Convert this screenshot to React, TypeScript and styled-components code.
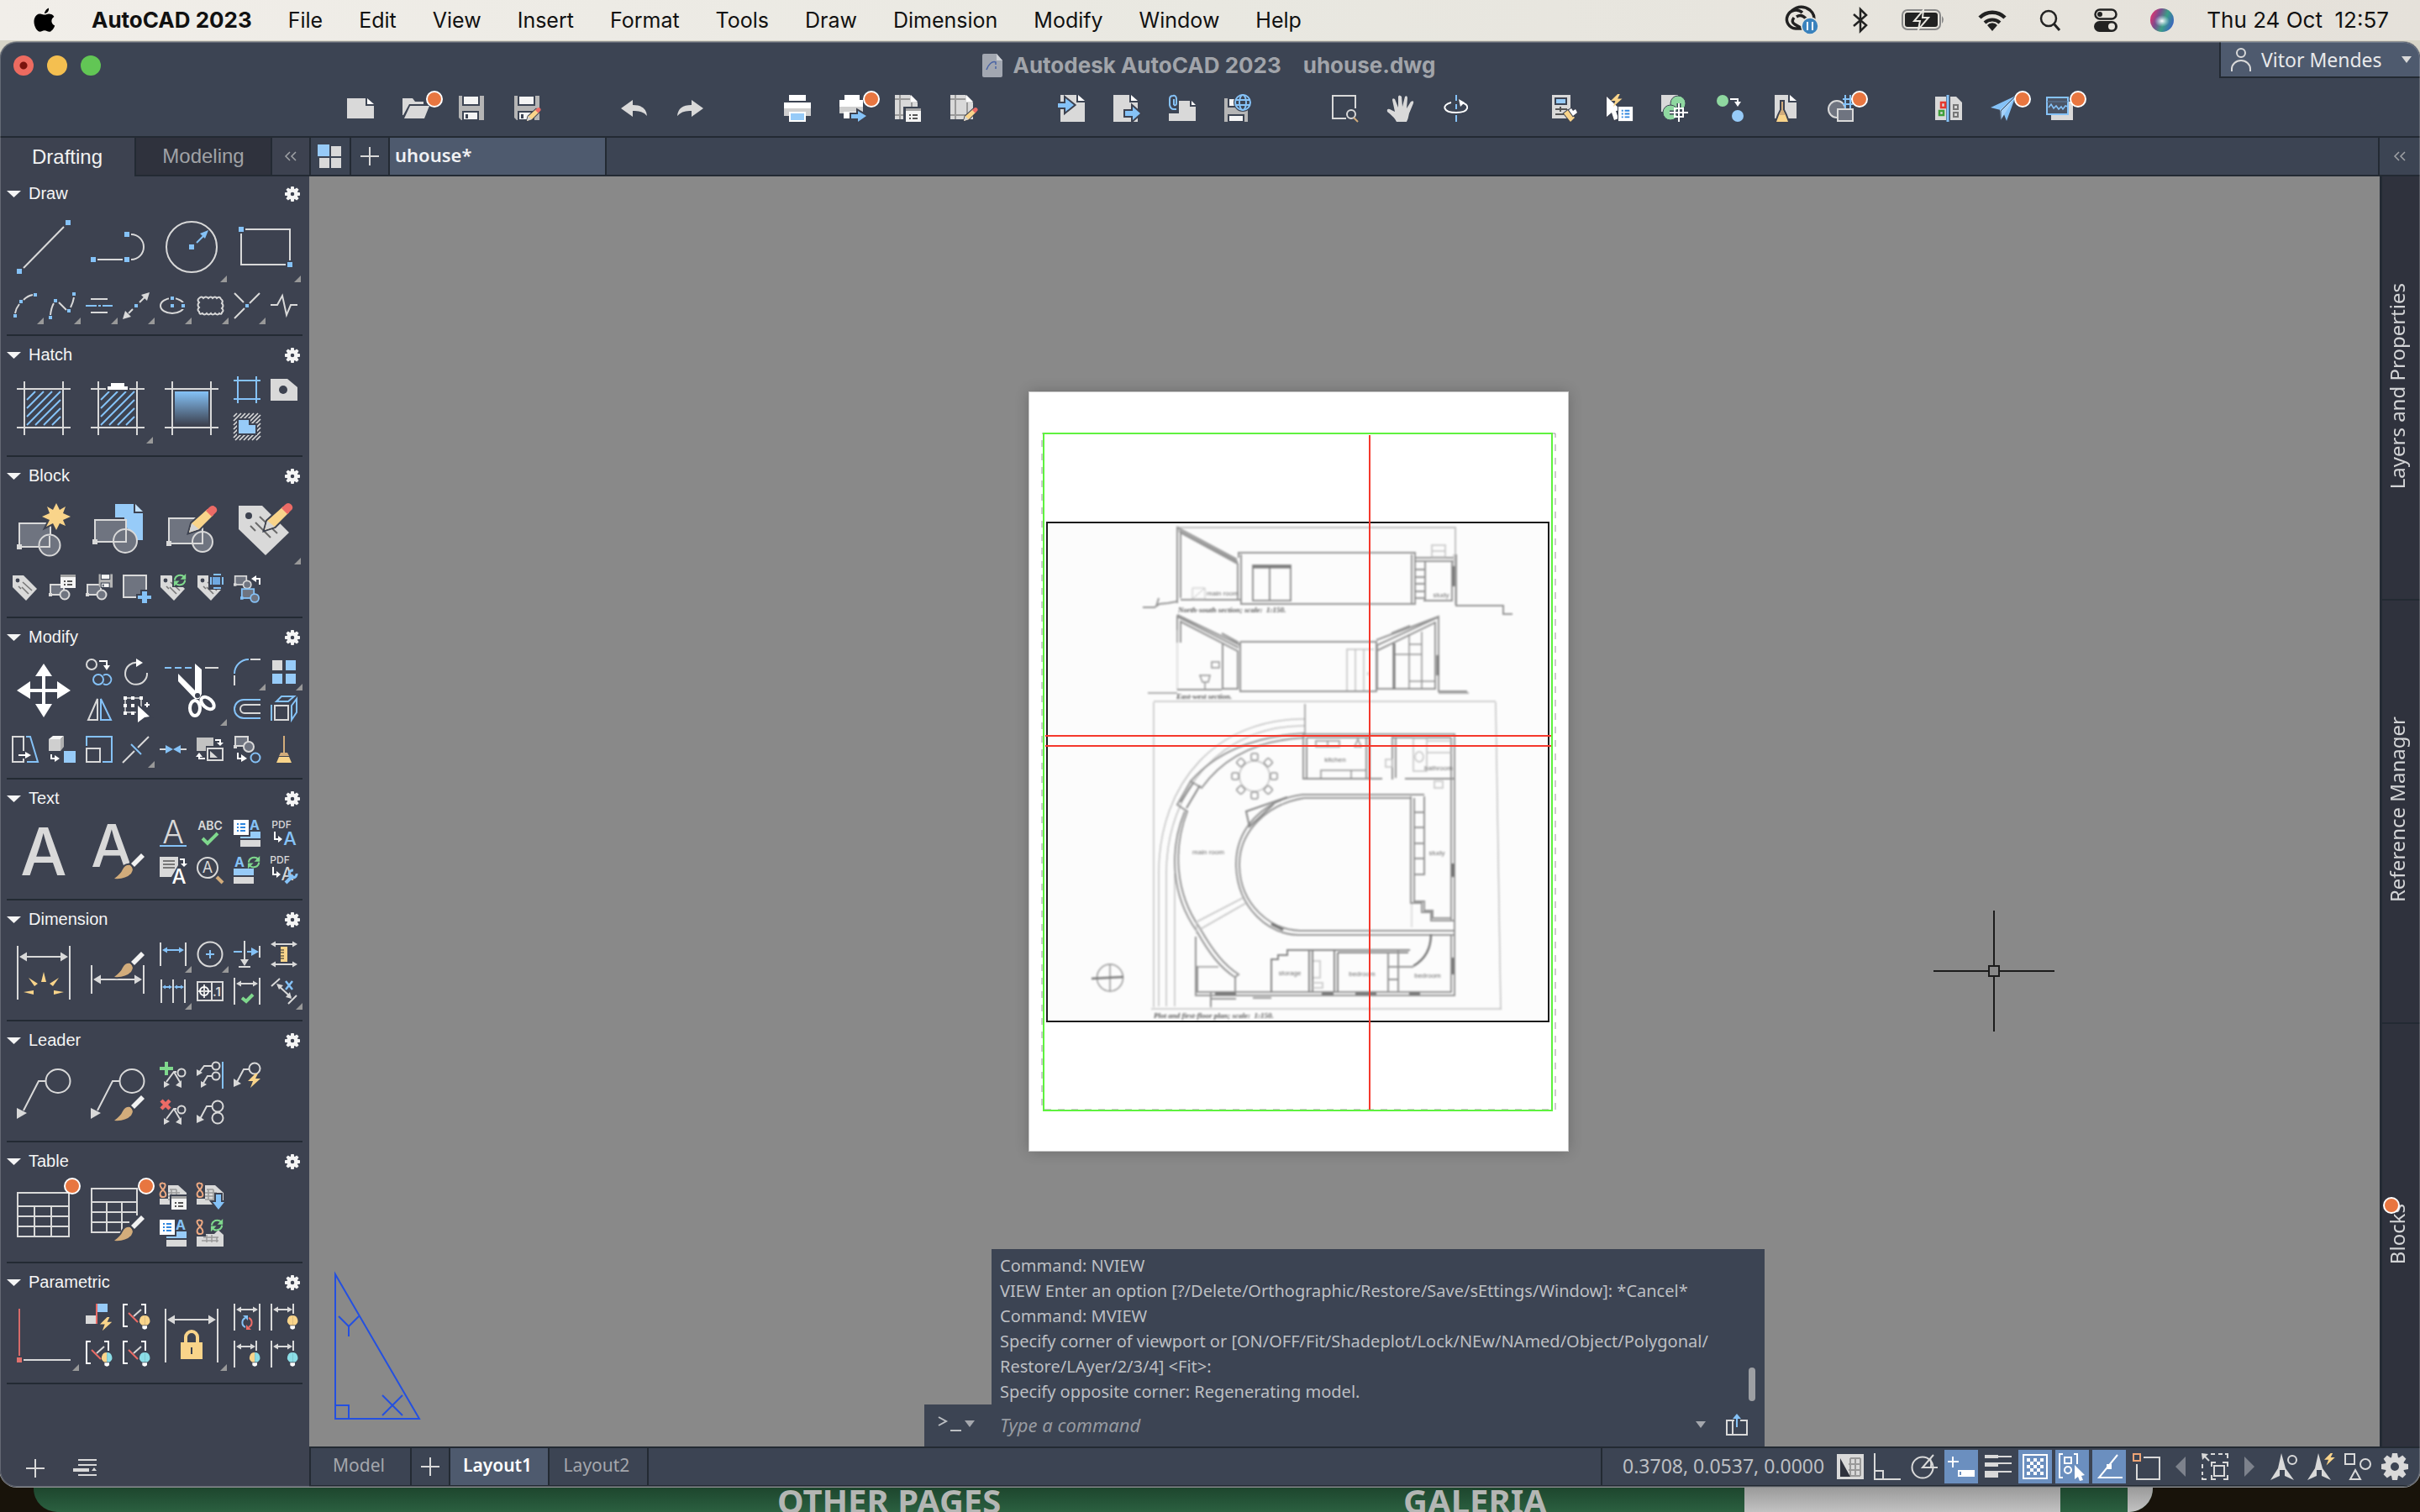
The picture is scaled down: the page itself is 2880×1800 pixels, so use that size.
import React, { ReactNode } from 'react';
import styled, { createGlobalStyle, css } from 'styled-components';

const C = {
  chrome: '#3c4453',
  palette: '#3d4250',
  line: '#232a33',
  dark: '#2f323d',
  active: '#4e5a6e',
  canvas: '#898989',
  grey: '#d9d9d9',
  blue: '#85c2f7',
  yellow: '#f9d48a',
  red: '#ec6b66',
  green: '#7fd88d',
  tan: '#d2ac7b',
  shade: '#6f7480',
  orange: '#e87640',
};
const UI = `"Noto Sans", "Open Sans", sans-serif`;
const HELV = `"Liberation Sans", Arial, sans-serif`;
const SYS = `Inter, Roboto, sans-serif`;

/* ---------- drawing helpers ---------- */
const s = (d: string, c = C.grey, w = 2, dash?: string) => (
  <path d={d} fill="none" stroke={c} strokeWidth={w} strokeDasharray={dash} />
);
const f = (d: string, c = C.grey) => <path d={d} fill={c} />;
const h = (d: string, c = C.grey) => (
  <path d={d} fill={c} stroke={C.palette} strokeWidth={4} style={{ paintOrder: 'stroke' }} />
);
const sq = (x: number, y: number, c = C.blue, r = 2) => (
  <rect x={x - r} y={y - r} width={r * 2} height={r * 2} fill={c} />
);
const o = (cx: number, cy: number, r: number, c = C.grey, fill = 'none') => (
  <circle cx={cx} cy={cy} r={r} stroke={c} strokeWidth={2} fill={fill} />
);
const at = (x: number, y: number, k: number, n: ReactNode) => (
  <g transform={`translate(${x} ${y}) scale(${k})`}>{n}</g>
);
const dbl = (x1: number, x2: number, y: number, c = C.grey, a = 6) => (
  <>
    {s(`M${x1 + 2} ${y}H${x2 - 2}`, c)}
    {f(`M${x1} ${y}l${a} ${-a * 0.6}v${a * 1.2}zM${x2} ${y}l${-a} ${-a * 0.6}v${a * 1.2}z`, c)}
  </>
);
const glyph = (x: number, y: number, size: number, t: string, c = C.grey, w = 500) => (
  <text x={x} y={y} fontSize={size} fontWeight={w} fill={c} textAnchor="middle" fontFamily={SYS}>{t}</text>
);

/* pencil, tip at 0,32 and end at 32,0 */
const pencil = (
  <>
    {h('M0 32L3 21L22 4L29 11L12 28Z', C.yellow)}
    {f('M0 32L3 21L12 28Z', '#d5d5d5')}
    {f('M20 6L24 2Q28 -2 32 2Q35 6 31 9L27 13Z', C.red)}
  </>
);
/* brush, tip at 0,30 and end at 36,0 */
const brush = (
  <>
    {h('M0 30Q8 24 10 19Q13 13 19 14Q24 18 20 24Q13 31 0 30Z', C.tan)}
    {h('M20 12L32 0L36 4L24 16Z', '#f2f2f2')}
  </>
);
const tag = (
  <>
    {f('M1 1H14L30 17L17 31L1 15Z')}
    <circle cx={7} cy={7} r={2.4} fill={C.palette} />
    {s('M8 14l3 3M13 9l11 10M12 15l8 8', '#777', 1.6)}
  </>
);
const cycle = (c: string) => (
  <>
    {s('M2 8A7 7 0 0 1 14 4', c, 2.2)}
    {s('M15 8A7 7 0 0 1 3 12', c, 2.2)}
    {f('M16 0V7H9Z', c)}
    {f('M1 16V9H8Z', c)}
  </>
);
const floppy = (
  <>
    {f('M1 1H31V30H4L1 27Z', '#b5b5b5')}
    <rect x={6} y={1} width={19} height={11} fill="#f4f4f4" stroke={C.chrome} strokeWidth={2} />
    <rect x={6} y={20} width={18} height={10} fill="#f4f4f4" stroke={C.chrome} strokeWidth={2} />
    {f('M9 23h3v5h-3z', C.chrome)}
  </>
);
const list = (
  <>
    <rect width={18} height={16} fill="#f4f4f4" />
    <rect width={18} height={3} fill="#a3a3a3" />
    {s('M4 8h2M8 8h6M4 12h2M8 12h6', '#555')}
  </>
);
const blueList = (
  <>
    <rect width={18} height={18} fill="#fff" />
    {s('M4 5h2M8 5h6M4 9h2M8 9h6M4 13h2M8 13h6', '#2f86de')}
  </>
);
const bolt = f('M9 0L0 9H6L3 17L15 6H9L12 0Z', C.yellow);
const bulb = (l: string, r: string) => (
  <>
    <path d="M6.5 0A6.5 6.5 0 0 0 3 12H6.5Z" fill={l} />
    <path d="M6.5 0A6.5 6.5 0 0 1 10 12H6.5Z" fill={r} />
    {f('M3.5 13H9.5V16Q6.5 19 3.5 16Z', '#fff')}
  </>
);
const blk = (c = C.grey) => (
  <>
    <rect x={2} y={8} width={16} height={12} fill={C.shade} stroke={c} strokeWidth={2} />
    {sq(2, 20, c)}
    <circle cx={19} cy={20} r={5.5} fill={C.shade} stroke={c} strokeWidth={2} />
  </>
);
const blkLow = <g transform="translate(0 4)">{blk()}</g>;
const frame = (c: string) => s('M9 0V64M55 0V64M0 9H64M0 55H64', c);
const hatch = s('M12 22L22 12M12 32L32 12M12 42L42 12M12 52L52 12M22 52L52 22M32 52L52 32M42 52L52 42', C.blue);
const chain = s('M4 8.5C-2 2 1 0 4 0.5C8 1 7 5 4 8.5C-1 12 0 17 4 17C9 17 8 12 4 8.5', '#eda982', 2);
const sheet = (
  <>
    {f('M0 14V3H22L32 12V26H0Z')}
    {s('M12 8h8M10 12h14M10 16h14M10 20h14M14 8v12M20 8v12', '#999', 1.5)}
    <path d="M-1 -1h11v20h-11z" fill={C.palette} />
    {chain}
  </>
);
const leaderMini = (
  <>
    {s('M8 24L17 12H20M17 12L24 24')}
    {f('M5 31V23L12 27ZM26 31L19 28L26 22Z')}
    {o(26, 13, 4.5)}
  </>
);
const bracket = (
  <>
    {s('M6 1H1V27H6M22 1H27V12', '#fff')}
    {s('M7 11L18 22', C.red)}
    {s('M13 15L22 7', C.grey)}
  </>
);
const dimSmall = (
  <>
    {s('M1 0V32M27 0V12')}
    {dbl(3, 26, 7)}
  </>
);
const leaderBig = (
  <>
    {s('M8 52L26 17H35')}
    <ellipse cx={49} cy={17} rx={14.5} ry={14} fill="none" stroke={C.grey} strokeWidth={2} />
    {f('M0 49L12 55L0 62Z')}
  </>
);

/* ---------- palette icons ---------- */
const I: Record<string, ReactNode> = {
  line: <>{s('M8 57L56 8')}{sq(3, 61, C.blue, 3)}{sq(61, 3, C.blue, 3)}</>,
  polyline: <>{s('M8 47H38M48 17A15 15 0 0 1 48 47')}{sq(3, 47, C.blue, 3)}{sq(43, 47, C.blue, 3)}{sq(43, 17, C.blue, 3)}</>,
  circle: <>{o(32, 32, 30)}{sq(32, 32, C.blue, 3)}{s('M38 27L47 18', C.blue)}{f('M52 12L42 16L48 22Z', C.blue)}</>,
  rect: <>{s('M8 11H61V48M56 53H3V16')}{sq(3, 11, C.blue, 3)}{sq(61, 53, C.blue, 3)}</>,
  arc: <>{s('M4 25Q5 19 9 14M14 9Q19 4 25 3')}{sq(4, 28)}{sq(11, 11)}{sq(28, 3)}</>,
  spline: <>{s('M2 27Q3 18 6 13M12 12L21 21M26 18Q29 12 30 6')}{sq(2, 30)}{sq(8, 10)}{sq(24, 22)}{sq(30, 2)}</>,
  centerline: <>{s('M6 8H26M6 24H26')}{s('M0 16H13M15 16H18M20 16H32', C.blue)}</>,
  xline: <>{s('M7 25L12 20M20 12L26 6')}{f('M0 32L3 22L10 29ZM32 0L22 3L29 10Z')}{sq(16, 16)}</>,
  ellipse: <><ellipse cx={15} cy={16} rx={14} ry={9} fill="none" stroke={C.grey} strokeWidth={2} /><path d="M11 5h8v5h-8zM25 12h7v8h-7z" fill={C.palette} />{sq(15, 7)}{sq(15, 16)}{sq(28, 16)}</>,
  cloud: s('M3 7q3 -3 5 0q3 -3 6 0q3 -3 5 0q3 -3 5 0q3 -3 5 1q3 2 1 5q3 3 0 6q3 3 0 5q0 3 -3 1q-2 3 -5 0q-3 3 -5 0q-3 3 -5 0q-3 3 -5 0q-4 2 -4 -2q-3 -2 0 -5q-3 -3 0 -6q-3 -3 0 -5'),
  breakx: <>{s('M1 1L12 12M31 1L19 13M13 19L1 31')}{sq(16, 16)}</>,
  zig: s('M0 15H8L14 4L19 27L24 15H32'),
  hatch: <>{frame(C.grey)}{hatch}</>,
  hatch2: <>{frame(C.grey)}{hatch}{h('M20 10V6H24V2H40V6H44V10Z', '#fff')}</>,
  gradient: <><defs><linearGradient id="fade" x1="0" y1="0" x2="0" y2="1"><stop offset="0" stopColor={C.blue} /><stop offset="1" stopColor={C.palette} /></linearGradient></defs>{frame(C.grey)}<rect x={12} y={12} width={40} height={40} fill="url(#fade)" /></>,
  boundary: s('M5 0V32M27 0V32M0 5H32M0 27H32', C.blue),
  wipeout: <>{f('M0 3H20L32 13V29H0Z')}<circle cx={15} cy={16} r={5} fill={C.palette} /></>,
  region: <>{s('M0 4L4 0M0 9L9 0M0 14L14 0M0 19L19 0M0 24L24 0M0 29L29 0M2 32L32 2M7 32L32 7M12 32L32 12M17 32L32 17M22 32L32 22M27 32L32 27', C.grey, 1.7)}{h('M6 8H18V14H26V24H6Z', '#97cbf8')}</>,
  blockNew: <><rect x={3} y={25} width={37} height={28} fill={C.shade} stroke={C.grey} strokeWidth={2} />{sq(3, 53, C.grey, 3)}{o(39, 51, 12.5, C.grey, C.shade)}{s('M39 40V53H28')}{h('M47 1L51 9L58 5L55 13L64 17L55 21L58 28L51 25L47 33L43 25L35 29L39 21L30 17L39 13L36 5L43 9Z', C.yellow)}</>,
  blockInsert: <>{f('M29 2H51V13H62V45H50Q47 32 40 28V18H29Z', '#97cbf8')}{f('M53 2L62 11H53Z', '#c4e1fa')}<rect x={5} y={21} width={37} height={26} fill={C.shade} stroke={C.grey} strokeWidth={2} />{sq(5, 47, C.grey, 3)}{o(41, 46, 14, C.grey, C.shade)}{s('M42 33V47H28')}</>,
  blockEdit: <><rect x={5} y={19} width={40} height={30} fill={C.shade} stroke={C.grey} strokeWidth={2} />{sq(5, 49, C.grey, 3)}{o(45, 47, 12, C.grey, C.shade)}{s('M45 34V49H33')}{at(29, 4, 1, pencil)}</>,
  tagEdit: <>{f('M0 4H28L60 36L32 63L0 32Z')}<circle cx={12} cy={16} r={4} fill={C.palette} />{s('M25 17L46 37M20 24L38 42M14 28L20 34', '#6a6a6a')}{at(31, 1, 1, pencil)}</>,
  tag,
  blkList: <>{blkLow}{at(14, 0, 1, list)}</>,
  blkSave: <>{blkLow}{at(15, -1, 0.55, floppy)}</>,
  blkAdd: <><rect x={1} y={1} width={27} height={26} fill={C.shade} stroke={C.grey} strokeWidth={2} />{h('M23 20h6v5h5v4h-5v5h-6v-5h-5v-4h5z', C.blue)}</>,
  tagSync: <>{tag}<path d="M15 0h17v15h-17z" fill={C.palette} />{at(16, -1, 0.95, cycle(C.green))}</>,
  tagAlign: <>{tag}<path d="M14 -1h19v19h-19z" fill={C.palette} />{f('M19 3h9v9h-9z', '#6fa8e0')}{s('M20 0h9M20 16h9M17 3v9M31 3v9', C.blue)}</>,
  blkSwap: <>{at(0, -5, 0.85, blk())}{at(8, 10, 0.9, blk(C.blue))}{s('M31 12V5H25', '#fff')}{f('M21 5L27 1V9Z', '#fff')}</>,
  move: f('M32 0L42 15H34V30H48V21L64 32L48 42V34H34V48H42L32 64L22 48H30V34H16V42L0 32L16 21V30H30V15H22Z', '#fff'),
  copy: <>{o(7, 7, 6)}{s('M16 3H25V9', '#fff')}{f('M21 8H29L25 14Z', '#fff')}{o(15, 25, 6, C.blue)}{s('M21 20A6 6 0 1 1 21 30', C.blue)}</>,
  rotate: <>{s('M29 17A13 13 0 1 1 18 5', C.grey)}{f('M16 0L24 5L16 10Z', '#fff')}</>,
  mirror: <>{s('M14 4V29H3Z')}{s('M18 4V29H30Z', C.blue)}</>,
  select: <>{s('M3 3H22V20H3Z', C.grey, 1.5)}{sq(3, 3, '#fff')}{sq(12, 3, '#fff')}{sq(22, 3, '#fff')}{sq(3, 12, '#fff')}{sq(12, 12, '#fff')}{sq(3, 21, '#fff')}{sq(12, 21, '#fff')}{s('M29 8v6M26 11h6', '#fff')}{h('M18 12L32 25L26 26L18 32Z', '#fff')}</>,
  trim: <>{s('M0 5H32', C.blue, 2, '8 4')}{s('M48 5H64', C.grey)}{f('M16 12L36 32V0L44 7V36L41 42L36 42L16 21Z', '#fff')}<ellipse cx={36} cy={53} rx={6} ry={9} fill="none" stroke="#fff" strokeWidth={4} /><ellipse cx={51} cy={47} rx={5.5} ry={9} fill="none" stroke="#fff" strokeWidth={4} transform="rotate(-48 51 47)" /><circle cx={39} cy={38} r={3} fill={C.palette} /></>,
  fillet: <>{s('M1 18A17 17 0 0 1 18 1', C.blue)}{s('M20 1H32M1 20V32')}</>,
  array: <>{f('M2 2h12v12h-12z')}{f('M18 2h12v12h-12zM2 18h12v12h-12zM18 18h12v12h-12z', '#97cbf8')}</>,
  offset: <>{s('M32 5H12A11 11 0 0 0 12 27H32', C.blue)}{s('M32 11H13A5 5 0 0 0 13 21H32')}</>,
  extrude: <>{s('M1 11V30M7 7H21L28 1H13ZM25 12L31 4V20L25 29Z', C.blue)}{s('M5 12H21V29H5Z')}</>,
  stretch: <>{s('M14 27V31H1V1H14V18')}{s('M17 1H22L31 31H18', C.blue)}{s('M8 23H18', '#fff')}{f('M16 19L23 23L16 27Z', '#fff')}</>,
  cube: <>{f('M0 4L5 0H18L14 4Z', '#f5f5f5')}{f('M0 4H14V18H0Z', '#cfcfcf')}{f('M14 4L18 0V13L14 18Z', '#b0b0b0')}{s('M3 22V27H8', '#fff')}{f('M7 23L13 27L7 31Z', '#fff')}{f('M18 18h14v14h-14z', '#97cbf8')}</>,
  scale: <>{s('M1 12V1H31V31H20', C.blue)}{s('M1 15H17V31H1Z')}</>,
  breakl: <>{s('M0 32L14 18M18 14L31 1')}{s('M10 10L22 22', C.blue)}</>,
  join: <>{s('M0 16H8M24 16H32')}{f('M7 11L16 16L7 21ZM25 11L16 16L25 21Z', C.blue)}</>,
  order: <>{f('M0 2H20V12H11V18H0Z', '#c2c2c2')}{s('M13 15H31V29H13Z')}{f('M16 18V26H25Z')}{s('M22 5H28V8', '#fff')}{f('M24 8H32L28 12Z', '#fff')}{s('M10 27H3V24', '#fff')}{f('M-1 25H7L3 20Z', '#fff')}</>,
  explode: <><rect x={2} y={1} width={15} height={11} fill={C.shade} stroke={C.grey} strokeWidth={2} />{sq(2, 13, C.grey)}{o(18, 13, 6, C.grey, C.shade)}{o(26, 26, 5.5, C.blue)}{s('M5 20V27H10', '#fff')}{f('M9 22L16 27L9 31Z', '#fff')}</>,
  broom: <>{s('M16 0V20', C.tan)}{f('M12 20H20L22 24H10Z', C.tan)}{f('M10 25H22L25 32H7Z', C.yellow)}</>,
  textA: glyph(32, 60, 78, 'A'),
  textBrush: <>{glyph(25, 50, 70, 'A')}{at(28, 34, 1, brush)}</>,
  textU: <>{glyph(16, 28, 38, 'A', C.grey, 300)}{s('M0 31H32', C.blue)}</>,
  abc: <>{glyph(16, 12, 14, 'ABC', C.grey, 600)}{s('M7 22L13 28L25 16', C.green, 4)}</>,
  textList: <>{at(0, 0, 1, blueList)}{glyph(25, 12, 16, 'A', C.blue, 700)}{f('M20 14H32V22H8V20H20Z', '#97cbf8')}{f('M8 24h24v8h-24z')}</>,
  pdf: <>{glyph(13, 10, 12, 'PDF', C.grey, 500)}{s('M5 14V23H10', '#fff')}{f('M9 19L14 23L9 27Z', '#fff')}{glyph(23, 30, 22, 'A', C.blue, 500)}</>,
  textConv: <>{f('M0 0H22V10L14 24H0Z')}{s('M4 5h14M4 9h14M4 13h14', '#777')}{s('M24 3H29V8', '#fff')}{f('M25 8H33L29 12Z', '#fff')}{glyph(23, 32, 24, 'A', '#fff', 500)}</>,
  textFind: <>{o(13, 13, 12)}{glyph(13, 19, 18, 'A', C.grey, 400)}{s('M24 24L31 31', C.tan, 4)}</>,
  textSync: <>{glyph(7, 12, 16, 'A', C.blue, 700)}{at(16, -1, 0.95, cycle(C.green))}{f('M0 14h24v8h-24z', '#97cbf8')}{f('M0 24h24v8h-24z')}</>,
  pdfSet: <>{glyph(11, 8, 12, 'PDF', C.grey, 500)}{s('M3 12V21H8', '#fff')}{f('M7 17L12 21L7 25Z', '#fff')}{glyph(20, 28, 22, 'A', C.grey, 400)}{s('M18 31L27 22', C.blue, 4)}{s('M31 20a4.5 4.5 0 1 1-4-4', C.blue, 3)}</>,
  dim: <>{s('M1 0V64M63 0V64')}{dbl(3, 61, 13, C.grey, 9)}{f('M32 31L35 43H29ZM14 38L25 45L21 48ZM50 38L39 45L43 48ZM8 55L20 53V58ZM56 55L44 53V58Z', C.yellow)}</>,
  dimBrush: <>{s('M1 23V57M63 23V57')}{dbl(3, 61, 40, C.grey, 9)}{at(28, 7, 1, brush)}</>,
  dimLin: <>{s('M1 2V30M31 2V30')}{dbl(3, 29, 11, C.blue)}</>,
  dimCen: <>{o(16, 16, 14.5)}{s('M11 16h10M16 11v10', C.blue)}</>,
  dimOrd: <>{s('M13 0V24M6 31H20M31 6V20')}{f('M8 22H18L13 30Z')}{s('M0 13H10M16 13H22', C.blue)}{f('M21 8L30 13L21 18Z', C.blue)}</>,
  dimScale: <>{dbl(0, 32, 4)}{dbl(0, 32, 28)}{f('M12 7h8v18h-8z', C.yellow)}{s('M12 11h4M12 14h4M12 18h4M12 21h4', '#6a6047', 1.5)}</>,
  dimCont: <>{s('M2 2V30M16 2V30M30 2V30')}{dbl(3, 15, 11, C.blue, 4)}{dbl(17, 29, 11, C.blue, 4)}</>,
  dimTol: <>{s('M1 5H31V27H1Z')}{s('M18 5V27M9 8V24M2 16H17')}{o(9, 16, 5, '#fff')}{glyph(24, 22, 15, '.1', C.grey, 600)}</>,
  dimCheck: <>{s('M1 0V32M31 0V32')}{dbl(3, 29, 7)}{s('M10 24L15 28L23 20', C.green, 4)}</>,
  dimX: <>{s('M1 10L11 1M21 31L31 21M9 9L24 23')}{f('M7 7L15 9L10 14ZM25 25L18 23L23 17Z')}{s('M18 4L26 14M26 4L18 14', C.blue, 2.5)}</>,
  leader: leaderBig,
  leaderBrush: <>{leaderBig}{at(28, 34, 1, brush)}</>,
  leaderAdd: <>{leaderMini}{f('M6 0h4v6h6v4h-6v6h-4v-6h-6v-4h6z', C.green)}</>,
  leaderAlign: <>{s('M2 14L9 5H18M7 27L13 17H19')}{f('M0 17V9L7 13ZM5 31V23L12 27Z')}{o(23, 5, 4.5)}{o(23, 17, 4.5)}{s('M31 0V32', C.blue)}</>,
  leaderBolt: <>{s('M3 26L12 9H18')}{f('M0 30V20L9 26Z')}{o(25, 8, 6.5)}{at(17, 14, 1, bolt)}</>,
  leaderDel: <>{leaderMini}{s('M2 2L12 12M12 2L2 12', C.red, 4.5)}</>,
  leaderMerge: <>{s('M3 26L12 9H18')}{f('M0 29V19L9 25Z')}{o(25, 9, 6.5)}{o(25, 23, 6.5)}</>,
  table: s('M1 6H62V58H1ZM1 22H62M1 34H62M1 46H62M21 22V58M41 22V58'),
  tableBrush: <>{s('M55 33V1H1V53H38M1 17H55M1 29H55M1 41H46M19 17V53M37 17V53')}{at(28, 33, 1, brush)}</>,
  dataList: <>{sheet}<path d="M12 14h20v18h-20z" fill={C.palette} />{at(14, 16, 1, list)}</>,
  dataDown: <>{sheet}{h('M23 14h6v9h4L26 32L19 23h4z', C.blue)}</>,
  tableText: <>{at(0, 0, 1, blueList)}{glyph(25, 12, 16, 'A', C.blue, 700)}{f('M20 14H32V22H8V20H20Z', '#97cbf8')}{f('M8 24h24v8h-24z')}</>,
  dataSync: <>{at(0, 6, 1, f('M0 14V3H22L32 12V26H0Z'))}{s('M8 21h18M6 25h20M12 18v9M18 18v9M24 21v6', '#999', 1.5)}<path d="M-1 -1h34v14h-8l-4 4h-10v3h-12z" fill={C.palette} />{chain}{at(16, -1, 0.95, cycle(C.green))}</>,
  param: <>{s('M3 0V56', '#d66a6a')}{sq(3, 61, '#e0716d', 3)}{s('M8 61H64')}</>,
  paramAuto: <>{s('M13 0V24', C.red)}{f('M14 0h12v10h-12z', '#97cbf8')}{f('M0 14h12v10h-12z')}{at(17, 16, 0.95, bolt)}</>,
  brY: <>{bracket}{at(20, 14, 0.95, bulb(C.yellow, C.yellow))}</>,
  brYB: <>{bracket}{at(19, 14, 0.95, bulb(C.yellow, '#8bdde6'))}</>,
  brB: <>{bracket}{at(20, 14, 0.95, bulb('#8bdde6', '#8bdde6'))}</>,
  lock: <>{s('M1 0V64M63 0V64')}{dbl(3, 61, 13, C.grey, 9)}{s('M25 40V34A7 7 0 0 1 39 34V40', C.yellow, 4)}{f('M19 40h26v20h-26z', C.yellow)}{f('M31 46h2v8h-2z', C.palette)}</>,
  dimCycle: <>{s('M1 0V32M31 0V32')}{dbl(3, 29, 7)}{s('M14 28A6 6 0 0 1 14 17', C.blue)}{s('M18 17A6 6 0 0 1 18 28', C.red)}{f('M11 14h6v6z', C.blue)}{f('M21 31h-6v-6z', C.red)}</>,
  dimY: <>{dimSmall}{at(20, 14, 0.95, bulb(C.yellow, C.yellow))}</>,
  dimYB: <>{dimSmall}{at(19, 14, 0.95, bulb(C.yellow, '#8bdde6'))}</>,
  dimB: <>{dimSmall}{at(20, 14, 0.95, bulb('#8bdde6', '#8bdde6'))}</>,
};

/* ---------- toolbar icons ---------- */
const plotSheet = (
  <>
    {f('M0 0H18L27 9V29H0Z')}
    {s('M0 5H18M6 0V29M0 24H20M20 9V24', '#999')}
    {f('M19 0L27 8H19Z', '#fff')}
  </>
);
const pageR = <>{f('M3 0H22V9H32V32H3Z')}{f('M24 0L32 7H24Z', '#fff')}</>;
const T: Record<string, ReactNode> = {
  new: <>{f('M0 4H22V13H32V28H0Z')}{f('M24 4L32 11H24Z', '#fff')}</>,
  open: <>{f('M0 4H12L15 8H25V11H8L1 24H0Z')}{f('M9 13H32L26 28H2Z')}</>,
  save: floppy,
  saveAs: <>{floppy}{at(16, 15, 0.5, pencil)}</>,
  undo: f('M0 16L14 6V12Q30 12 31 25Q25 18 14 19V26Z'),
  redo: f('M32 16L18 6V12Q2 12 1 25Q7 18 18 19V26Z'),
  print: <>{f('M6 0h20v7h-20z', '#fff')}{f('M0 9h32v9h-32z', '#fff')}{f('M0 16h32v9h-32z', '#cfcfcf')}<rect x={7} y={21} width={18} height={10} fill="#97cbf8" stroke="#fff" strokeWidth={2} /></>,
  batch: <>{f('M6 0h18v7h-18z', '#fff')}{f('M0 6h28v8h-28z', '#fff')}{f('M0 14h28v8h-28z', '#cfcfcf')}{f('M5 20h16v8h-16z', '#fff')}{h('M14 23h8v-4L32 25L22 32v-4h-8z', C.blue)}</>,
  pageSetup: <>{plotSheet}<path d="M10 14h22v18h-22z" fill={C.chrome} />{at(13, 16, 1, list)}</>,
  plotEdit: <>{plotSheet}{at(16, 15, 0.5, pencil)}</>,
  import: <>{pageR}{h('M0 10h9v-6L19 12L9 20v-5h-9z', C.blue)}</>,
  export: <>{f('M0 0H19V9H29V32H0Z')}{f('M21 0L29 7H21Z', '#fff')}{h('M14 19h9v-5L32 22L23 30v-5h-9z', C.blue)}</>,
  attach: <>{f('M0 22H12V7H25V14H32V31H0Z')}{f('M27 7L32 12H27Z', '#fff')}<path d="M-1 -1h12v21h-12z" fill={C.chrome} />{s('M6 12V5M6 12Q9 13 9 10V4Q8 0 5 1Q1 1 1 5V12Q2 17 6 17H9', C.blue)}</>,
  web: <>{f('M0 4H28V32H0Z', '#b5b5b5')}<path d="M5 4h10v10h-10zM5 24h18v8h-18z" fill="#f4f4f4" stroke={C.chrome} strokeWidth={2} /><circle cx={22} cy={9} r={11} fill={C.chrome} />{o(22, 9, 9, C.blue)}<ellipse cx={22} cy={9} rx={4} ry={9} fill="none" stroke={C.blue} strokeWidth={2} />{s('M13 6H31M13 12H31', C.blue)}</>,
  zoomWin: <>{s('M17 28H1V1H28V16')}{o(23, 23, 5)}{s('M26 27L31 32', C.tan)}</>,
  hand: f('M11 32Q9 27 0 20Q-1 16 3 17L9 20L6 6Q6 3 9 5L13 15L13 2Q14 -1 17 2L18 14L21 2Q24 0 24 4L23 16L28 8Q32 6 31 10L26 22Q25 28 23 32Z'),
  orbit: <>{s('M16 0V7M16 11V17M16 24V32', C.blue)}{s('M10 9C-2 12 0 21 16 21C32 21 33 11 22 9', '#fff')}{f('M19 5L26 9L21 14Z', '#fff')}</>,
  match: <>{f('M2 0H24V28H2Z')}<rect x={6} y={4} width={13} height={7} fill="#97cbf8" stroke={C.chrome} strokeWidth={2} />{s('M6 17h14M12 14v6M6 23h10', '#555')}{at(16, 17, 0.5, <>{h('M0 10L10 2L26 20L16 30Z', C.yellow)}{h('M12 2L18 -2L22 4L28 0L32 8L22 16Z', '#fff')}</>)}</>,
  quick: <>{h('M1 2L18 18L12 19L15 28L10 30L7 21L1 26Z', '#fff')}{at(6, -1, 0.9, bolt)}<path d="M14 12h19v21h-19z" fill={C.chrome} />{at(15, 14, 0.95, blueList)}</>,
  count: <>{f('M0 0H20V20H0Z')}<circle cx={20} cy={10} r={9} fill="#8fd8a0" stroke={C.chrome} /><circle cx={11} cy={21} r={9} fill="#8fd8a0" stroke={C.chrome} />{s('M21 10V32M10 21H32', C.chrome, 5)}{s('M21 10V32M10 21H32M16 16H26V26H16Z', '#fff')}</>,
  replace: <><circle cx={7} cy={7} r={7} fill="#8fd8a0" /><circle cx={25} cy={25} r={7} fill="#97cbf8" />{s('M16 5H25V9', '#fff')}{f('M21 8H29L25 14Z', '#fff')}</>,
  purge: <>{f('M3 0H19V9H29V28H3Z')}{f('M21 0L29 7H21Z', '#fff')}{h('M11 8H13V18L16 24L19 32H5L8 24L11 18Z', C.yellow)}{f('M11 8H13V18L16 24H8L11 18Z', C.tan)}</>,
  number: <>{o(11, 17, 10, C.grey, C.shade)}<rect x={12} y={17} width={18} height={14} fill={C.shade} stroke={C.grey} strokeWidth={2} />{s('M21 0V16M27 0V16M18 5H30M18 11H30', C.blue)}</>,
  compare: <>{f('M0 2H13V30H0Z')}{f('M18 2H25L32 9V30H18Z')}{s('M15 0V32', C.blue, 3)}<path d="M7 9h5v6h-5z" fill="none" stroke="#e5392f" strokeWidth={2.5} /><path d="M5 19h5v5h-5z" fill="none" stroke="#3f9e3a" strokeWidth={2.5} />{s('M22 12h5v5h-5zM22 21h5v5h-5z', '#777')}</>,
  send: <>{f('M0 15L30 1L12 18ZM30 1L19 31L14 18Z', C.blue)}{f('M30 1L12 30L11 18Z', '#a5d2fa')}{s('M30 1L12 19V30', C.chrome, 1)}</>,
  activity: <>{f('M6 8H32V30H6Z')}<rect x={1} y={3} width={25} height={20} fill="#4b5566" stroke={C.blue} strokeWidth={2} />{s('M1 8H26', '#5c7c9c', 1)}{s('M3 15L6 11L9 16L12 13L15 17L18 14L20 17L23 13L26 14', C.blue, 1.5)}</>,
};

/* ---------- status icons ---------- */
const ST: Record<string, ReactNode> = {
  grid: <>{f('M0 1h32v30h-32z')}{s('M16 6H28M14 13H28M14 20H28M14 27H28M16 6V27M22 6V27M28 6V27', '#999')}{f('M4 6L16 28H4Z', '#2f323d')}</>,
  ortho: s('M1 0V31H32M1 21H11V31'),
  polar: <>{o(14, 17, 12.5)}{s('M27 2L14 17H32')}{s('M23 6Q25 12 24 17')}</>,
  dyn: <>{s('M6 4V17M0 10H13', '#fff')}{f('M12 20h20v8h-20z', '#fff')}{f('M14 22h2v4h-2z', '#6b8fbf')}</>,
  weight: <>{s('M0 4H32')}{f('M0 2h16v4h-16zM0 11h16v5h-16zM0 21h16v8h-16z')}{f('M14 11h18v2h-18zM14 21h18v2h-18z')}</>,
  transp: <>{s('M2 2H30V30H2Z', '#fff')}{f('M6 6h4v4h-4zM14 6h4v4h-4zM22 6h4v4h-4zM10 10h4v4h-4zM18 10h4v4h-4zM6 14h4v4h-4zM14 14h4v4h-4zM22 14h4v4h-4zM10 18h4v4h-4zM18 18h4v4h-4zM6 22h4v4h-4zM14 22h4v4h-4zM22 22h4v4h-4z', '#fff')}</>,
  cycleSel: <>{s('M5 1H1V29H5M18 1H22V13M7 5H15V12H7Z', '#fff')}{o(11, 20, 4, '#fff')}<path d="M19 14L31 26L27 27L29 32L25 33L23 28L19 31Z" fill="#fff" /></>,
  osnap: <>{s('M26 2L4 29H32', '#fff')}{sq(16, 16, '#fff', 3)}</>,
  anno: <>{s('M13 5H32V31H5V13')}<rect x={1} y={1} width={8} height={8} fill={C.chrome} stroke="#eda374" strokeWidth={2} /></>,
  prev: f('M22 4V28L10 16Z', '#7d828c'),
  next: f('M10 4V28L22 16Z', '#7d828c'),
  viewport: <>{s('M11 1H16M20 1H25M28 1H31V6M1 13V18M1 22V26M1 29V31H6')}{s('M12 16V11H17M25 11H31V16M31 26V31H26M17 31H12V26M15 15H27V27H15Z')}{f('M0 0L8 1L1 8Z')}{s('M3 3L9 9')}</>,
  annoVis: <>{f('M13 0L18 18L28 32L17 27V20H11V27L0 32L9 18Z')}{o(26, 8, 5)}</>,
  annoAuto: <>{f('M13 0L18 18L28 32L17 27V20H11V27L0 32L9 18Z')}{at(20, 0, 0.85, bolt)}</>,
  workspace: <>{s('M1 1H12V13H1ZM13 20L19 31H7Z')}{o(25, 13, 6)}</>,
};

/* ---------- styled parts ---------- */
const Global = createGlobalStyle`
  html, body { margin: 0; }
  *, *::before, *::after { box-sizing: border-box; }
  body { font-family: ${UI}; background: #120b06; overflow: hidden; }
  button, input { font: inherit; color: inherit; border: 0; padding: 0; margin: 0; background: none; outline: none; }
  svg { display: block; overflow: visible; flex: none; }
`;
const Desktop = styled.div`
  position: relative;
  display: flex;
  flex-direction: column;
  height: 100vh;
  padding-bottom: 30px;
  background: linear-gradient(#d8d5c8 0 120px, #120b06 121px);
`;
const MenuBar = styled.header`
  display: flex;
  align-items: center;
  justify-content: space-between;
  height: 48px;
  flex: none;
  padding: 0 37px 0 40px;
  background: linear-gradient(90deg, #f1eee9, #e9e8e1 50%, #e5e1da);
  font-family: ${SYS};
  font-size: 25px;
  line-height: 32px;
  color: #111;
`;
const Menus = styled.nav`
  display: flex;
  align-items: center;
  gap: 43px;
  white-space: nowrap;
`;
const MenuItem = styled.button<{ $bold?: boolean }>`
  ${(p) => p.$bold && 'font-size: 26px; font-weight: 700;'}
`;
const Tray = styled.div`
  display: flex;
  align-items: center;
  gap: 39px;
`;
const Clock = styled.time`
  font-size: 26px;
  white-space: pre;
`;
const Backdrop = styled.div`
  position: absolute;
  inset: auto 0 0 0;
  height: 60px;
  display: flex;
  padding-left: 40px;
  background: #18130a;
`;
const Site = styled.div`
  display: flex;
  align-items: flex-end;
  width: 2522px;
  border-radius: 0 0 28px 28px;
  overflow: hidden;
  background: linear-gradient(#1d452d 30px, #2b6040);
`;
const SiteMenu = styled.div`
  flex: 1;
  display: flex;
  justify-content: space-between;
  height: 30px;
  padding: 0 235px 0 885px;
  font-weight: 700;
  font-size: 40px;
  line-height: 34px;
  color: #b4b6b4;
`;
const Pane = styled.div<{ $w: number }>`
  width: ${(p) => p.$w}px;
  height: 60px;
  background: linear-gradient(#999 30px, #c2c2c2);
`;
const Gap = styled.div`
  width: 80px;
`;
const Window = styled.div`
  position: relative;
  flex: 1;
  min-height: 0;
  margin-top: 2px;
  display: flex;
  flex-direction: column;
  border-radius: 20px;
  overflow: hidden;
  background: ${C.chrome};
  color: ${C.grey};
  box-shadow: 0 0 0 1px #8d8f90;
  &::after {
    content: '';
    position: absolute;
    inset: 0;
    border: 1px solid rgba(255, 255, 255, 0.2);
    border-radius: 20px;
    pointer-events: none;
  }
`;
const TopArea = styled.div`
  position: relative;
  height: 114px;
  flex: none;
  border-bottom: 2px solid ${C.line};
`;
const TitleBar = styled.div`
  display: flex;
  align-items: center;
  height: 56px;
  padding-left: 16px;
`;
const Lights = styled.div`
  display: flex;
  gap: 16px;
  width: 240px;
`;
const Light = styled.button<{ $c: string; $dot?: boolean }>`
  width: 24px;
  height: 24px;
  border-radius: 50%;
  background: ${(p) => (p.$dot ? `radial-gradient(#7a130d 4px, ${p.$c} 5px)` : p.$c)};
`;
const Title = styled.h1`
  flex: 1;
  display: flex;
  justify-content: center;
  align-items: center;
  gap: 12px;
  margin: 0;
  padding-right: 258px;
  font-family: ${SYS};
  font-size: 26px;
  line-height: 32px;
  font-weight: 700;
  color: #a1a4aa;
  white-space: nowrap;
`;
const FileName = styled.span`
  margin-left: 14px;
`;
const UserMenu = styled.button`
  position: absolute;
  top: 0;
  right: 0;
  display: flex;
  align-items: center;
  gap: 12px;
  width: 239px;
  height: 43px;
  padding: 0 10px 0 12px;
  border-left: 2px solid ${C.line};
  border-bottom: 2px solid ${C.line};
  background: ${C.active};
  font-size: 23px;
  color: #e8e9eb;
  white-space: nowrap;
  svg:last-child { margin-left: auto; }
`;
const Toolbar = styled.div`
  display: flex;
  gap: 96px;
  padding: 7px 0 0 413px;
`;
const Group = styled.div`
  display: flex;
  gap: 34px;
`;
const ToolBtn = styled.button`
  position: relative;
  width: 32px;
  height: 32px;
`;
const Badge = styled.span<{ $x: number; $y: number }>`
  position: absolute;
  left: ${(p) => p.$x}px;
  top: ${(p) => p.$y}px;
  width: 20px;
  height: 20px;
  border: 2px solid #fff;
  border-radius: 50%;
  background: ${C.orange};
`;
const Body = styled.div`
  flex: 1;
  min-height: 0;
  display: flex;
`;
const Palette = styled.aside`
  width: 368px;
  flex: none;
  display: flex;
  flex-direction: column;
  background: ${C.palette};
`;
const PaletteTabs = styled.div`
  display: grid;
  grid-template-columns: 160px 162px 46px;
  height: 46px;
  flex: none;
`;
const PaletteTab = styled.button<{ $on?: boolean; $dark?: boolean }>`
  display: grid;
  place-items: center;
  font-family: ${HELV};
  font-size: 24px;
  color: ${(p) => (p.$on ? '#f2f2f2' : '#a0a2a6')};
  background: ${(p) => (p.$dark ? C.dark : 'transparent')};
  ${(p) =>
    !p.$on &&
    css`
      border-left: 2px solid ${C.line};
      border-bottom: 2px solid ${C.line};
    `}
`;
const Sections = styled.div`
  flex: 1;
  margin-top: -2px;
  padding: 0 8px;
`;
const Section = styled.section`
  padding-bottom: 12px;
  border-bottom: 2px solid ${C.line};
`;
const SectionHead = styled.div`
  display: flex;
  align-items: center;
  gap: 9px;
  height: 42px;
  padding: 4px 3px 0 0;
  color: #f5f5f5;
`;
const SectionTitle = styled.h2`
  flex: 1;
  margin: 0;
  padding-bottom: 2px;
  font-family: ${HELV};
  font-size: 20px;
  line-height: 24px;
  font-weight: 400;
`;
const Tools = styled.div`
  display: grid;
  grid-template-columns: repeat(8, 44px);
  grid-auto-rows: 44px;
  & + & { margin-top: 4px; }
`;
const Tool = styled.button<{ $big?: boolean; $col?: number }>`
  position: relative;
  display: grid;
  place-items: center;
  ${(p) => p.$big && 'grid-column: span 2; grid-row: span 2;'}
  ${(p) => p.$col && `grid-column-start: ${p.$col};`}
`;
const Corner = styled.span<{ $big?: boolean }>`
  position: absolute;
  right: ${(p) => (p.$big ? 2 : 0)}px;
  bottom: ${(p) => (p.$big ? 2 : 0)}px;
  width: 8px;
  height: 8px;
  background: #999;
  clip-path: polygon(100% 0, 100% 100%, 0 100%);
`;
const PaletteFoot = styled.div`
  display: flex;
  align-items: center;
  gap: 34px;
  height: 44px;
  padding-left: 31px;
`;
const Main = styled.main`
  flex: 1;
  min-width: 0;
  display: flex;
  flex-direction: column;
`;
const FileTabs = styled.div`
  display: flex;
  height: 46px;
  flex: none;
  border-bottom: 2px solid ${C.line};
`;
const FileCell = styled.button<{ $w: number; $end?: boolean }>`
  display: grid;
  place-items: center;
  width: ${(p) => p.$w}px;
  border-left: 2px solid ${C.line};
  ${(p) => p.$end && 'margin-left: auto; color: #a0a2a6;'}
`;
const FileTab = styled.button`
  width: 260px;
  padding: 0 0 4px 6px;
  border-left: 2px solid ${C.line};
  border-right: 2px solid ${C.line};
  background: ${C.active};
  font-size: 22px;
  font-weight: 600;
  text-align: left;
  color: #f0f1f3;
`;
const Mid = styled.div`
  flex: 1;
  min-height: 0;
  display: flex;
`;
const Canvas = styled.div`
  position: relative;
  flex: 1;
  overflow: hidden;
  background: ${C.canvas};
`;
const Paper = styled.div`
  position: absolute;
  left: 857px;
  top: 257px;
  background: #fff;
  box-shadow: 0 0 0 1px #c9c9c9, 0 0 16px rgba(0, 0, 0, 0.24);
`;
const Pin = styled.div<{ $x: number; $y: number }>`
  position: absolute;
  left: ${(p) => p.$x}px;
  top: ${(p) => p.$y}px;
`;
const Console = styled.div`
  position: absolute;
  inset: auto 0 0 0;
  width: 1000px;
  margin: 0 auto;
  color: #bcbfc3;
`;
const History = styled.div`
  display: flex;
  justify-content: space-between;
  align-items: flex-end;
  height: 185px;
  margin-left: 80px;
  padding: 5px 11px 0 10px;
  background: ${C.chrome};
`;
const Lines = styled.div`
  align-self: flex-start;
  font-size: 20px;
  line-height: 30px;
  white-space: nowrap;
`;
const Thumb = styled.div`
  width: 8px;
  height: 40px;
  margin-bottom: 4px;
  border-radius: 4px;
  background: #9d9fa3;
`;
const Prompt = styled.form`
  display: flex;
  align-items: center;
  height: 50px;
  padding: 0 20px 2px 16px;
  background: ${C.chrome};
`;
const PromptBtn = styled.button<{ $w: number }>`
  display: grid;
  justify-items: start;
  width: ${(p) => p.$w}px;
`;
const CommandInput = styled.input`
  flex: 1;
  font-size: 22px;
  font-style: italic;
  &::placeholder { color: #979ba1; opacity: 1; }
`;
const Rail = styled.div`
  display: flex;
  flex-direction: column;
  width: 48px;
  flex: none;
  border-left: 3px solid ${C.line};
  background: ${C.dark};
`;
const RailTab = styled.button`
  position: relative;
  flex: 1;
  display: flex;
  align-items: center;
  justify-content: center;
  padding: 0 10px 4px 0;
  font-size: 24px;
  line-height: 32px;
  color: #d3d4d6;
  & + & { border-top: 2px solid ${C.line}; }
`;
const RailText = styled.span`
  writing-mode: vertical-rl;
  transform: rotate(180deg);
  white-space: nowrap;
`;
const StatusBar = styled.footer`
  display: flex;
  height: 48px;
  flex: none;
  border-top: 2px solid ${C.line};
  border-bottom: 2px solid ${C.line};
`;
const LayoutTab = styled.button<{ $w: number; $on?: boolean; $last?: boolean }>`
  display: grid;
  place-items: center;
  width: ${(p) => p.$w}px;
  padding: 0 4px 4px 0;
  border-left: 2px solid ${C.line};
  ${(p) => p.$last && `border-right: 2px solid ${C.line};`}
  font-size: 21px;
  font-weight: ${(p) => (p.$on ? 600 : 400)};
  color: ${(p) => (p.$on ? '#fff' : '#a4a7ad')};
  background: ${(p) => (p.$on ? C.active : 'transparent')};
`;
const AddLayout = styled(LayoutTab)`
  padding: 0;
`;
const StatusRight = styled.div`
  display: flex;
  align-items: center;
  gap: 4px;
  margin-left: auto;
  padding: 0 10px 0 24px;
  border-left: 2px solid ${C.line};
`;
const Coords = styled.output`
  width: 247px;
  padding-bottom: 2px;
  font-size: 23px;
  line-height: 30px;
  color: #bcbfc3;
  white-space: nowrap;
`;
const StatusBtn = styled.button<{ $on?: boolean; $w?: number }>`
  display: grid;
  place-items: center;
  width: ${(p) => p.$w ?? 40}px;
  height: 40px;
  background: ${(p) => (p.$on ? '#6b8fbf' : 'transparent')};
`;

/* ---------- small shared drawings ---------- */
const Svg = ({ w, h: hh = w, vb, children }: { w: number; h?: number; vb?: string; children: ReactNode }) => (
  <svg width={w} height={hh} viewBox={vb ?? `0 0 ${w} ${hh}`} aria-hidden="true">{children}</svg>
);
const Gear = ({ w, hole }: { w: number; hole: number }) => (
  <Svg w={w} vb="0 0 32 32">
    {Array.from({ length: 8 }, (_, i) => (
      <path key={i} d="M13 0H19L20.5 8H11.5Z" fill="currentColor" transform={`rotate(${i * 45} 16 16)`} />
    ))}
    <circle cx={16} cy={16} r={(hole + 11.5) / 2} fill="none" stroke="currentColor" strokeWidth={11.5 - hole} />
  </Svg>
);
const Down = ({ w, c = C.grey }: { w: number; c?: string }) => (
  <Svg w={w} h={8}>{f(`M0 0H${w}L${w / 2} 8Z`, c)}</Svg>
);
const Chevrons = () => (
  <Svg w={14} h={12}>{s('M6 1L1 6L6 11M13 1L8 6L13 11', '#a0a2a6', 1.5)}</Svg>
);
const Plus = () => <Svg w={22}>{s('M11 0V22M0 11H22')}</Svg>;

/* ---------- data ---------- */
type Item = { i: string; big?: boolean; corner?: boolean; col?: number; badge?: boolean };
const B = (i: string, x: Partial<Item> = {}): Item => ({ i, big: true, ...x });
const S = (i: string, x: Partial<Item> = {}): Item => ({ i, ...x });
const K = { corner: true };
const sections: { name: string; rows: Item[][] }[] = [
  { name: 'Draw', rows: [[B('line'), B('polyline'), B('circle', K), B('rect', K)], [S('arc', K), S('spline', K), S('centerline', K), S('xline', K), S('ellipse', K), S('cloud', K), S('breakx', K), S('zig')]] },
  { name: 'Hatch', rows: [[B('hatch'), B('hatch2', K), B('gradient'), S('boundary'), S('wipeout'), S('region')]] },
  { name: 'Block', rows: [[B('blockNew'), B('blockInsert'), B('blockEdit'), B('tagEdit', K)], [S('tag'), S('blkList'), S('blkSave'), S('blkAdd'), S('tagSync'), S('tagAlign'), S('blkSwap')]] },
  { name: 'Modify', rows: [[B('move'), S('copy'), S('rotate'), B('trim', K), S('fillet', K), S('array', K), S('mirror'), S('select'), S('offset'), S('extrude')], [S('stretch'), S('cube'), S('scale'), S('breakl', K), S('join'), S('order'), S('explode'), S('broom')]] },
  { name: 'Text', rows: [[B('textA'), B('textBrush'), S('textU'), S('abc'), S('textList'), S('pdf'), S('textConv'), S('textFind'), S('textSync'), S('pdfSet')]] },
  { name: 'Dimension', rows: [[B('dim'), B('dimBrush'), S('dimLin', K), S('dimCen', K), S('dimOrd'), S('dimScale'), S('dimCont', K), S('dimTol'), S('dimCheck'), S('dimX', K)]] },
  { name: 'Leader', rows: [[B('leader'), B('leaderBrush'), S('leaderAdd'), S('leaderAlign'), S('leaderBolt'), S('leaderDel', { col: 5 }), S('leaderMerge')]] },
  { name: 'Table', rows: [[B('table', { badge: true }), B('tableBrush', { badge: true }), S('dataList'), S('dataDown'), S('tableText', { col: 5 }), S('dataSync')]] },
  { name: 'Parametric', rows: [[B('param', K), S('paramAuto'), S('brY'), B('lock', K), S('dimCycle'), S('dimY'), S('brYB'), S('brB'), S('dimYB'), S('dimB')]] },
];
const toolbar = [
  ['new', 'open!', 'save', 'saveAs'],
  ['undo', 'redo'],
  ['print', 'batch!', 'pageSetup', 'plotEdit'],
  ['import', 'export', 'attach', 'web'],
  ['zoomWin', 'hand', 'orbit'],
  ['match', 'quick', 'count', 'replace', 'purge', 'number!'],
  ['compare', 'send!', 'activity!'],
];
const menus = ['File', 'Edit', 'View', 'Insert', 'Format', 'Tools', 'Draw', 'Dimension', 'Modify', 'Window', 'Help'];
const log = [
  'Command: NVIEW',
  'VIEW Enter an option [?/Delete/Orthographic/Restore/Save/sEttings/Window]: *Cancel*',
  'Command: MVIEW',
  'Specify corner of viewport or [ON/OFF/Fit/Shadeplot/Lock/NEw/NAmed/Object/Polygonal/',
  'Restore/LAyer/2/3/4] <Fit>:',
  'Specify opposite corner: Regenerating model.',
];
const status: { i: string; on?: boolean; w?: number }[] = [
  { i: 'grid' }, { i: 'ortho' }, { i: 'polar' }, { i: 'dyn', on: true }, { i: 'weight' },
  { i: 'transp', on: true }, { i: 'cycleSel', on: true }, { i: 'osnap', on: true }, { i: 'anno' },
  { i: 'prev', w: 34 }, { i: 'viewport' }, { i: 'next', w: 34 }, { i: 'annoVis' }, { i: 'annoAuto' }, { i: 'workspace' },
];

/* ---------- house drawing, in window units ---------- */
const wall = '#959595';
const thin = '#c2c2c2';
const chairs = Array.from({ length: 8 }, (_, i) => i * 45);
const label = (x: number, y: number, t: string) => (
  <text x={x} y={y} fontSize={8} textAnchor="middle" fill="#6a6a6a" fontFamily={HELV}>{t}</text>
);
const caption = (x: number, y: number, t: string) => (
  <text x={x} y={y} fontSize={9} fontStyle="italic" fontWeight={700} fill="#555" fontFamily='"Liberation Serif", serif' xmlSpace="preserve">{t}</text>
);
const Drawing = () => (
  <Svg w={641} h={903} vb="1225 467 641 903">
    <rect x={1246} y={622} width={597} height={594} fill="#fcfcfc" />
    <g style={{ filter: 'blur(0.8px)' }}>
      {/* north-south section */}
      {s('M1401 628H1732V720', thin, 2)}
      {s('M1401 712V628L1472 666M1405 712V634L1473 671V713M1405 714H1476M1401 712V718', wall, 2)}
      {s('M1403 632L1473 669', wall, 2)}
      {s('M1474 664V658H1684V719H1477V660M1680 660V719', wall, 2)}
      {s('M1491 673H1536V715H1491ZM1511 673V715', wall, 2)}
      {s('M1491 675H1536', '#777', 3)}
      {s('M1684 664H1730M1684 668H1730M1728 668V715H1694M1696 668V714M1684 678H1696M1684 687H1696M1684 695H1696M1684 704H1696M1684 712H1696', wall, 2)}
      {s('M1704 649H1720V663H1704ZM1704 656H1720M1730 660V698', thin, 1.5)}
      {s('M1730 674V698', '#777', 3)}
      {s('M1360 723H1374L1380 719L1390 718L1401 716M1376 722L1379 712M1733 660V721H1789V731H1800', wall, 2)}
      {s('M1419 700H1434V713H1419ZM1419 713L1434 700', thin, 1)}
      {label(1455, 709, 'main room')}
      {label(1715, 711, 'study')}
      {caption(1402, 729, 'North-south section; scale:  1:150.')}
      {/* east-west section */}
      {s('M1401 765V734L1474 771M1405 765V740L1473 775V820H1455V765M1401 732L1476 768M1454 754L1474 765', wall, 2)}
      {s('M1401 750V822', thin, 1)}
      {s('M1476 764H1638V823H1476V764M1401 821H1454', wall, 2)}
      {s('M1603 822V773H1635M1613 773V822M1623 773V822M1628 800v4', thin, 1.5)}
      {s('M1638 762L1712 734V823H1746M1640 774L1708 741V820H1639V768L1711 735M1656 754L1678 745', wall, 2)}
      {s('M1659 766V820', '#777', 3)}
      {s('M1677 755V820M1692 752V820M1660 779H1692M1677 767H1692M1677 811H1707', wall, 1.5)}
      {s('M1711 780V804', '#777', 3)}
      {s('M1366 825H1401M1712 825H1748M1442 788H1451V795H1442ZM1428 804H1440L1438 812H1431ZM1434 812V820', wall, 1.5)}
      {caption(1400, 832, 'East-west section.')}
      {/* plot outline and terraces */}
      {s('M1373 835H1780M1373 836V1199M1780 836L1786 1202M1370 1201H1787', thin, 1.5)}
      {s('M1379 1198V1040C1379 930 1450 855 1553 856M1388 1198V1040C1388 940 1455 863 1553 864M1398 1198V1040', thin, 1.5)}
      {s('M1553 838V876', wall, 1.5)}
      {/* curved wing */}
      {s('M1553 873C1490 876 1445 898 1417 930L1430 938C1455 903 1495 881 1553 878', wall, 2)}
      {s('M1417 930L1401 958L1413 966C1396 1010 1398 1062 1428 1105C1444 1133 1457 1149 1474 1160L1470 1163', wall, 2)}
      {s('M1410 966C1391 1012 1394 1066 1424 1108C1440 1137 1453 1152 1469 1163', wall, 2)}
      {s('M1412 962L1428 935M1405 955L1420 932', '#858585', 2)}
      {/* dining table */}
      <circle cx={1493} cy={924} r={18} fill="none" stroke={thin} strokeWidth={1.5} />
      {chairs.map((a) => (
        <rect key={a} x={1489} y={897} width={8} height={8} rx={2} fill="none" stroke={wall} strokeWidth={1.5} transform={`rotate(${a} 1493 924)`} />
      ))}
      {/* courtyard */}
      {s('M1695 946H1550C1505 952 1470 985 1471 1031C1473 1082 1510 1112 1545 1113H1688', wall, 2)}
      {s('M1679 950H1552C1508 957 1474 990 1475 1031C1476 1077 1512 1107 1547 1108H1731M1688 1113H1731', wall, 2)}
      {s('M1532 949L1483 966L1487 984L1516 957', '#858585', 2)}
      {s('M1513 1100L1527 1107', '#707070', 3)}
      {s('M1479 1069L1425 1097M1483 1075L1427 1107M1424 1097V1112', thin, 1.5)}
      {/* kitchen and bathroom */}
      {s('M1553 874H1731V928M1551 874V928M1555 878V926M1626 878V928M1630 878V928M1657 876V928M1661 878V926M1731 928V1110M1727 878V1096', wall, 2)}
      {s('M1555 878H1630M1657 878H1727M1551 927H1645M1672 927H1731', '#909090', 2)}
      {s('M1566 882H1594V889H1566ZM1580 882V889M1572 926V917H1608V926M1608 917H1626M1612 889L1616 880L1620 889Z', wall, 1.5)}
      {s('M1649 904H1657V913H1649ZM1682 879H1698V918H1682ZM1698 882H1727M1698 896H1727M1707 930H1717V938H1707Z', thin, 1.5)}
      <ellipse cx={1689} cy={901} rx={5} ry={6} fill="none" stroke={thin} strokeWidth={1.5} />
      {label(1589, 907, 'kitchen')}
      {label(1712, 917, 'bathroom')}
      {/* study wing */}
      {s('M1679 948V1075H1692V1086H1703V1096H1731M1683 950V1073H1695V1084H1705V1093H1728M1695 948V1041H1683M1683 967H1695M1683 985H1695M1683 1004H1695M1683 1022H1695', wall, 2)}
      {s('M1680 1076V1104', thin, 1)}
      {s('M1729 1028V1044M1729 1140V1160', '#707070', 3)}
      {label(1438, 1017, 'main room')}
      {label(1710, 1018, 'study')}
      {/* lower wing */}
      {s('M1423 1115V1185H1731V1110M1425 1181H1727V1113M1425 1150V1182M1470 1162V1181', wall, 2)}
      {s('M1423 1151H1450', wall, 1.5)}
      {s('M1513 1181V1142H1521V1137H1532V1131H1678M1558 1131V1181M1562 1131V1181M1588 1131V1181M1592 1134V1181M1592 1134H1676', '#858585', 2)}
      {s('M1652 1134V1181M1664 1131V1181M1652 1151H1682M1652 1166H1664V1151', wall, 2)}
      {s('M1703 1112Q1703 1138 1682 1150', '#777', 2.5)}
      {s('M1563 1144H1571V1164H1563M1562 1170H1574V1176H1562', thin, 1.5)}
      {s('M1441 1182V1199M1441 1189H1471M1491 1188H1513', wall, 2)}
      {s('M1446 1183H1471M1573 1183H1587M1613 1183H1638M1677 1183H1690', '#777', 3)}
      {label(1535, 1161, 'storage')}
      {label(1621, 1162, 'bedroom')}
      {label(1699, 1164, 'bedroom')}
      {/* north mark */}
      <ellipse cx={1321} cy={1164} rx={15.5} ry={16} fill="none" stroke={wall} strokeWidth={1.5} />
      {s('M1321 1148V1180', wall, 1.5)}
      {s('M1299 1165L1337 1163', '#777', 2.5)}
      {caption(1373, 1212, 'Plot and first-floor plan; scale:  1:150.')}
    </g>
    {s('M1246 622H1843V1216H1246Z', '#1b1b1b', 2)}
    {s('M1240 516H1851V1321H1240Z', '#999', 1, '8 8')}
    {s('M1242 516H1847V1322H1242Z', '#5ff23f', 2)}
    {s('M1630 518V1321M1244 876H1846M1244 888H1846', '#f5382c', 2)}
  </Svg>
);

const apple = 'M17 7C18 4 20 1 23 0C24 4 21 8 17 8ZM17 10C20 10 22 8 25 9C28 9 30 11 31 13C26 16 26 23 32 26C31 30 27 35 24 35C21 35 20 33 17 33C14 33 13 35 10 35C5 34 0 24 2 16C4 10 8 8 12 9C14 9 15 10 17 10Z';

export default function App() {
  return (
    <Desktop>
      <Global />
      <Backdrop>
        <Site>
          <SiteMenu><span>OTHER PAGES</span><span>GALERIA</span></SiteMenu>
          <Pane $w={376} />
          <Gap />
          <Pane $w={30} />
        </Site>
      </Backdrop>
      <MenuBar>
        <Menus>
          <Svg w={26} h={32} vb="1 0 32 36">{f(apple, '#000')}</Svg>
          <MenuItem $bold>AutoCAD 2023</MenuItem>
          {menus.map((m) => <MenuItem key={m}>{m}</MenuItem>)}
        </Menus>
        <Tray>
          <Svg w={42} h={32}>
            <path d="M22 26H14A11 11 0 1 1 22 7M9 5Q20 -4 31 4Q38 10 35 18M12 13Q8 18 13 21L20 25M15 12Q21 8 27 15L31 19" fill="none" stroke="#222" strokeWidth={3.5} />
            <circle cx={31} cy={23} r={10} fill="#3a82bd" stroke="#e9e7e0" strokeWidth={1.5} />
            {s('M28 18V28M34 18V28', '#fff')}
          </Svg>
          <Svg w={20} h={30}>{s('M2 8L17 21L10 28V2L17 9L2 22', '#222', 2.5)}</Svg>
          <Svg w={52} h={26}>
            <rect x={1} y={1} width={45} height={23} rx={6} fill="none" stroke="#888" strokeWidth={2} />
            <rect x={4} y={4} width={39} height={17} rx={3} fill="#222" />
            {f('M48 8Q52 12 48 17Z', '#888')}
            <path d="M26 1L15 14H22L20 24L32 10H25Z" fill="#222" stroke="#e9e7e0" strokeWidth={2} />
          </Svg>
          <Svg w={34} h={26}>
            {s('M2 10A21 21 0 0 1 32 10', '#222', 4.5)}
            {s('M8 16A13 13 0 0 1 26 16', '#222', 4)}
            {f('M11 19A8 8 0 0 1 23 19L17 26Z', '#222')}
          </Svg>
          <Svg w={26} h={26}>
            <circle cx={11} cy={11} r={9} fill="none" stroke="#222" strokeWidth={2.5} />
            {s('M17 17L24 25', '#222', 3)}
          </Svg>
          <Svg w={28} h={28}>
            <rect x={1.5} y={1.5} width={25} height={11} rx={5.5} fill="none" stroke="#222" strokeWidth={2.5} />
            <circle cx={7} cy={7} r={3} fill="#222" />
            <rect y={15} width={28} height={13} rx={6.5} fill="#222" />
            <circle cx={21} cy={21.5} r={4} fill="#e7e4dd" />
          </Svg>
          <Svg w={28} h={28}>
            <defs>
              <linearGradient id="orb" x1="0" y1="0.3" x2="1" y2="0.7">
                <stop offset="0" stopColor="#e3336f" /><stop offset="0.3" stopColor="#7b4b8d" /><stop offset="0.6" stopColor="#3b9d86" /><stop offset="1" stopColor="#3a5fc4" />
              </linearGradient>
              <radialGradient id="glow"><stop offset="0" stopColor="#fff" /><stop offset="1" stopColor="#bde3f5" stopOpacity="0" /></radialGradient>
            </defs>
            <circle cx={14} cy={14} r={14} fill="url(#orb)" />
            <ellipse cx={14} cy={15} rx={9} ry={7} fill="url(#glow)" />
          </Svg>
          <Clock>Thu 24 Oct  12:57</Clock>
        </Tray>
      </MenuBar>
      <Window>
        <TopArea>
          <TitleBar>
            <Lights>
              <Light $c="#ed6b60" $dot aria-label="Close" />
              <Light $c="#f4bf50" aria-label="Minimize" />
              <Light $c="#62c655" aria-label="Zoom" />
            </Lights>
            <Title>
              <Svg w={24} h={28}>
                {f('M0 2Q0 0 2 0H17L24 8V26Q24 28 22 28H2Q0 28 0 26Z', '#a2a7b1')}
                {f('M17 0L24 8H17Z', '#cfd2d8')}
                {s('M5 19C7 13 12 8 16 10V13M16 15v3', '#4a64a4', 1.5)}
              </Svg>
              <span>Autodesk AutoCAD 2023</span>
              <FileName>uhouse.dwg</FileName>
            </Title>
            <UserMenu>
              <Svg w={24} h={28}>{o(12, 6, 5)}{s('M1 28V25A11 10 0 0 1 23 25V28')}</Svg>
              <span>Vitor Mendes</span>
              <Down w={12} />
            </UserMenu>
          </TitleBar>
          <Toolbar>
            {toolbar.map((g, n) => (
              <Group key={n}>
                {g.map((k) => {
                  const id = k.replace('!', '');
                  return (
                    <ToolBtn key={k} aria-label={id}>
                      <Svg w={32}>{T[id]}</Svg>
                      {k.endsWith('!') && <Badge $x={28} $y={-5} />}
                    </ToolBtn>
                  );
                })}
              </Group>
            ))}
          </Toolbar>
        </TopArea>
        <Body>
          <Palette>
            <PaletteTabs>
              <PaletteTab $on>Drafting</PaletteTab>
              <PaletteTab $dark>Modeling</PaletteTab>
              <PaletteTab aria-label="Collapse"><Chevrons /></PaletteTab>
            </PaletteTabs>
            <Sections>
              {sections.map((sec) => (
                <Section key={sec.name}>
                  <SectionHead>
                    <Down w={17} c="#f5f5f5" />
                    <SectionTitle>{sec.name}</SectionTitle>
                    <Gear w={18} hole={4} />
                  </SectionHead>
                  {sec.rows.map((row, n) => (
                    <Tools key={n}>
                      {row.map((t) => (
                        <Tool key={t.i} $big={t.big} $col={t.col} aria-label={t.i}>
                          <Svg w={t.big ? 64 : 32}>{I[t.i]}</Svg>
                          {t.corner && <Corner $big={t.big} />}
                          {t.badge && <Badge $x={68} $y={0} />}
                        </Tool>
                      ))}
                    </Tools>
                  ))}
                </Section>
              ))}
            </Sections>
            <PaletteFoot>
              <Plus />
              <Svg w={28} h={22}>{s('M6 1H28M6 7H28M6 19H28M6 13H19')}{f('M0 11h19v4h-19zM22 14h6l-3-4z')}</Svg>
            </PaletteFoot>
          </Palette>
          <Main>
            <FileTabs>
              <FileCell $w={48} aria-label="Start">
                <Svg w={30} h={28}>{f('M0 0h14v14h-14z', '#97cbf8')}{f('M16 2h12v12h-12zM2 16h12v12h-12zM16 16h12v12h-12z')}</Svg>
              </FileCell>
              <FileCell $w={46} aria-label="New tab"><Plus /></FileCell>
              <FileTab>uhouse*</FileTab>
              <FileCell $w={50} $end aria-label="Expand"><Chevrons /></FileCell>
            </FileTabs>
            <Mid>
              <Canvas>
                <Paper><Drawing /></Paper>
                <Pin $x={30} $y={1305}>
                  <Svg w={104} h={176}>
                    {s('M1 2V174H101ZM1 158H17V174M57 146L81 170M81 146L57 170M5 52L17 64L29 52M17 64V76', '#2450e0')}
                  </Svg>
                </Pin>
                <Pin $x={1933} $y={874}>
                  <Svg w={144}>{s('M0 72H66M78 72H144M72 0V66M72 78V144M66 66H78V78H66Z', '#1c1c1c')}</Svg>
                </Pin>
                <Console>
                  <History>
                    <Lines>{log.map((l) => <div key={l}>{l}</div>)}</Lines>
                    <Thumb />
                  </History>
                  <Prompt>
                    <PromptBtn type="button" $w={74} aria-label="Recent commands">
                      <Svg w={44} h={20}>{s('M1 1L10 6L1 11M15 17H28', '#bcbfc3')}{f('M32 5H44L38 13Z', '#a4a7ad')}</Svg>
                    </PromptBtn>
                    <CommandInput aria-label="Command" placeholder="Type a command" />
                    <PromptBtn type="button" $w={36} aria-label="History"><Down w={12} c="#a4a7ad" /></PromptBtn>
                    <PromptBtn type="button" $w={26} aria-label="Undock">
                      <Svg w={26} h={26}>{s('M10 8H1V25H25V8H17M8 8V25')}{s('M13 4V16', C.blue)}{f('M8 6L13 0L18 6Z', C.blue)}</Svg>
                    </PromptBtn>
                  </Prompt>
                </Console>
              </Canvas>
              <Rail>
                <RailTab><RailText>Layers and Properties</RailText></RailTab>
                <RailTab><RailText>Reference Manager</RailText></RailTab>
                <RailTab><RailText>Blocks</RailText><Badge $x={1} $y={206} /></RailTab>
              </Rail>
            </Mid>
            <StatusBar>
              <LayoutTab $w={120}>Model</LayoutTab>
              <AddLayout $w={46} aria-label="Add layout"><Plus /></AddLayout>
              <LayoutTab $w={118} $on>Layout1</LayoutTab>
              <LayoutTab $w={120} $last>Layout2</LayoutTab>
              <StatusRight>
                <Coords>0.3708, 0.0537, 0.0000</Coords>
                {status.map((b) => (
                  <StatusBtn key={b.i} $on={b.on} $w={b.w} aria-label={b.i}><Svg w={32}>{ST[b.i]}</Svg></StatusBtn>
                ))}
                <StatusBtn aria-label="Settings"><Gear w={32} hole={5} /></StatusBtn>
              </StatusRight>
            </StatusBar>
          </Main>
        </Body>
      </Window>
    </Desktop>
  );
}
